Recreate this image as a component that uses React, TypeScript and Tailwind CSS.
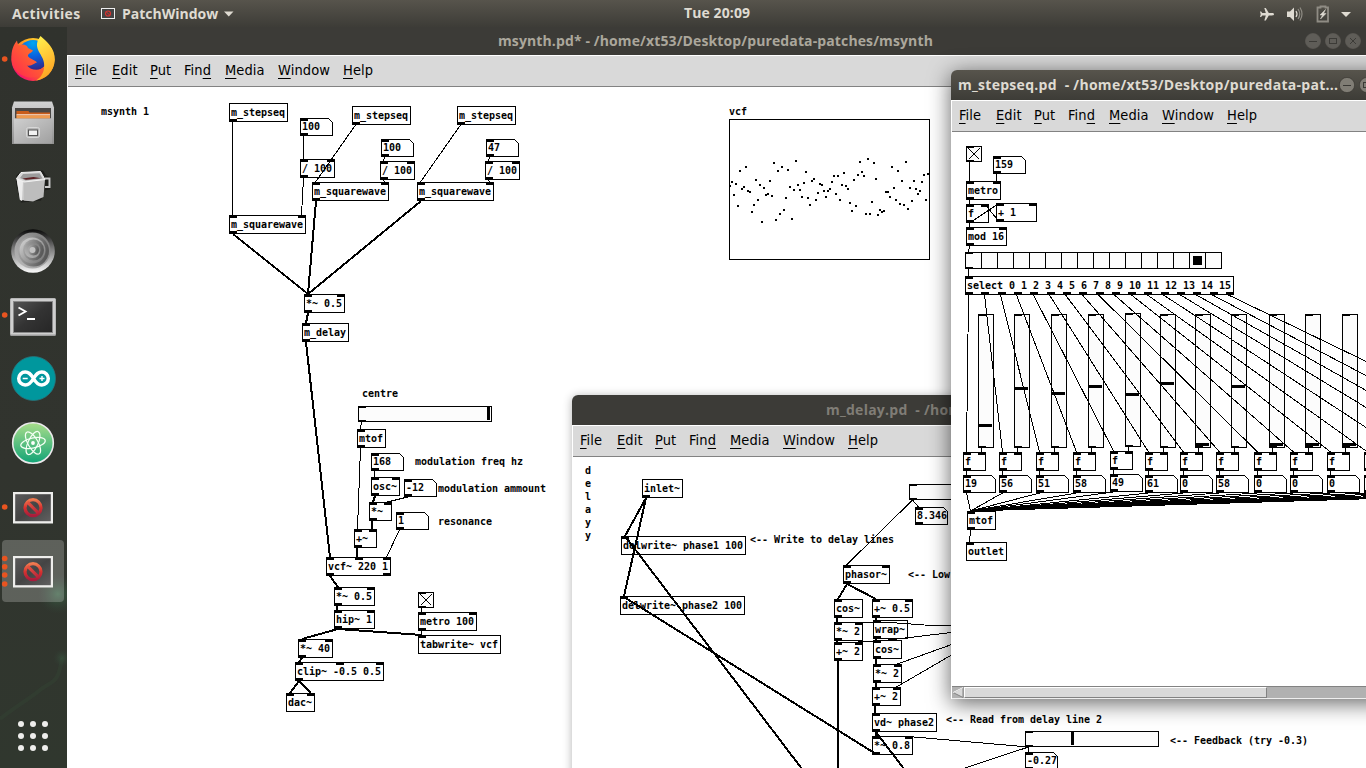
import React from 'react';

type Kind = 'obj' | 'num';
interface Item {
  k: Kind;
  x: number;
  y: number;
  t: string;
  ins?: number;
  outs?: number;
  chars?: number;
}

const o = (x: number, y: number, t: string, ins = 1, outs = 1, chars?: number): Item => ({ k: 'obj', x, y, t, ins, outs, chars });
const n = (x: number, y: number, t: string): Item => ({ k: 'num', x, y, t });

const MONO = 'font-["DejaVu_Sans_Mono",monospace] font-bold text-[10px] tracking-[-0.02px] whitespace-pre text-black';

function Ports({ count, edge }: { count: number; edge: 'top' | 'bottom' }) {
  return (
    <div className="flex h-[3px] justify-between">
      {Array.from({ length: count }, (_, i) => (
        <span key={i} className={edge === 'top' ? 'h-[3px] w-2 shrink-0 bg-black' : 'h-[3px] w-2 shrink-0 bg-black'} />
      ))}
    </div>
  );
}

function Box({ it }: { it: Item }) {
  if (it.k === 'num') {
    return (
      <div className="absolute flex h-[18px] w-[33px] flex-col justify-between" style={{ left: it.x, top: it.y }}>
        <svg className="absolute inset-0" width="33" height="18" shapeRendering="crispEdges">
          <path d="M.5.5H28.5L32.5 4.5V17.5H.5Z" fill="none" stroke="#000" />
        </svg>
        <Ports count={1} edge="top" />
        <span className={`-my-[3px] pl-[2px] leading-[18px] ${MONO}`}>{it.t}</span>
        <Ports count={1} edge="bottom" />
      </div>
    );
  }
  const width = (it.chars ?? Math.max(3, it.t.length)) * 6 + 5;
  return (
    <div
      className="absolute flex h-[19px] flex-col justify-between outline-1 -outline-offset-1 outline-black"
      style={{ left: it.x, top: it.y, width }}
    >
      <Ports count={it.ins ?? 0} edge="top" />
      <span className={`-my-[3px] pl-[2px] leading-[19px] ${MONO}`}>{it.t}</span>
      <Ports count={it.outs ?? 0} edge="bottom" />
    </div>
  );
}

function Note({ x, y, t }: { x: number; y: number; t: string }) {
  return (
    <span className={`absolute leading-[13px] ${MONO}`} style={{ left: x, top: y - 6 }}>
      {t}
    </span>
  );
}

function HSlider({ x, y, knob }: { x: number; y: number; knob?: number }) {
  return (
    <svg className="absolute" style={{ left: x, top: y }} width="134" height="16" shapeRendering="crispEdges">
      <rect x=".5" y=".5" width="133" height="15" fill="#fcfcfc" stroke="#000" />
      <path d="M0 0h8v2H0zM0 14h8v2H0z" />
      {knob !== undefined && <rect x={knob + 1} y="1" width="3" height="13" />}
    </svg>
  );
}

function VSlider({ x, y, knob }: { x: number; y: number; knob: number }) {
  return (
    <svg className="absolute" style={{ left: x, top: y }} width="16" height="134" shapeRendering="crispEdges">
      <rect x=".5" y=".5" width="15" height="133" fill="#fcfcfc" stroke="#000" />
      <path d="M0 0h8v2H0zM0 132h8v2H0z" />
      <rect x="1" y={knob - y} width="13" height="3" />
    </svg>
  );
}

function Toggle({ x, y }: { x: number; y: number }) {
  return (
    <svg className="absolute" style={{ left: x, top: y }} width="16" height="16" shapeRendering="crispEdges">
      <rect x=".5" y=".5" width="15" height="15" fill="#fcfcfc" stroke="#000" />
      <path d="M0 0h8v2H0zM0 14h8v2H0z" />
      <path d="M2.500 2.500L13.500 13.500M2.500 13.500L13.500 2.500" stroke="#000" />
    </svg>
  );
}

type Wire = [number, number, number, number, number?];

function Wires({ list }: { list: Wire[] }) {
  return (
    <svg className="absolute inset-0" width="1366" height="768" shapeRendering="crispEdges">
      {list.map(([x1, y1, x2, y2, w], i) => (
        <line key={i} x1={x1} y1={y1} x2={x2} y2={y2} stroke="#000" strokeWidth={w ?? 1} />
      ))}
    </svg>
  );
}

const MENU: [string, string, string, string][] = [
  ['', 'F', 'ile', 'w-[24px]'],
  ['', 'E', 'dit', 'w-[25px]'],
  ['', 'P', 'ut', 'w-[21px]'],
  ['Fin', 'd', '', 'w-[28px]'],
  ['', 'M', 'edia', 'w-[40px]'],
  ['', 'W', 'indow', 'w-[52px]'],
  ['', 'H', 'elp', 'w-[30px]'],
];

function MenuBar() {
  return (
    <div className="flex h-8 shrink-0 items-center gap-[13px] border-b border-t border-b-[#828282] border-t-white bg-[#d9d9d9] pb-[2px] pl-[7px] font-['DejaVu_Sans_Condensed','DejaVu_Sans',sans-serif] text-[14.500px] leading-none tracking-[0.1px] text-black [font-stretch:condensed]">
      {MENU.map(([a, u, b, w]) => (
        <span key={u} className={`${w} whitespace-nowrap`}>
          {a}
          <span className="underline decoration-1 underline-offset-[3px]">{u}</span>
          {b}
        </span>
      ))}
    </div>
  );
}

const UI = 'font-["Open_Sans","Noto_Sans",sans-serif] font-bold whitespace-pre';

function WinButton({ kind, active }: { kind: 'min' | 'max' | 'close'; active?: boolean }) {
  const s = active ? '#3a3935' : '#3c3b37';
  return (
    <svg width="16" height="16" viewBox="0 0 16 16" className="shrink-0">
      <circle cx="8" cy="8" r="7.600" fill={active ? '#807d75' : '#5f5d58'} stroke={active ? '#35342f' : '#5f5d58'} strokeWidth=".6" />
      {kind === 'min' && <path d="M4 8.500h8" stroke={s} />}
      {kind === 'max' && <rect x="4.500" y="5.500" width="7" height="5" fill="none" stroke={s} />}
      {kind === 'close' && <path d="M5 5l6 6M11 5l-6 6" stroke={s} />}
    </svg>
  );
}

/* ---------- msynth.pd ---------- */

const mainItems: Item[] = [
  o(229, 103, 'm_stepseq', 0, 1),
  n(300, 118, '100'),
  o(300, 159, '/ 100', 2, 1),
  o(352, 106, 'm_stepseq', 0, 1),
  o(457, 106, 'm_stepseq', 0, 1),
  n(381, 139, '100'),
  o(380, 161, '/ 100', 2, 1),
  n(486, 139, '47'),
  o(485, 161, '/ 100', 2, 1),
  o(312, 182, 'm_squarewave', 2, 1),
  o(417, 182, 'm_squarewave', 2, 1),
  o(229, 215, 'm_squarewave', 2, 1),
  o(304, 294, '*~ 0.5', 2, 1),
  o(302, 323, 'm_delay'),
  o(357, 429, 'mtof'),
  n(371, 453, '168'),
  o(371, 477, 'osc~', 2, 1),
  n(404, 479, '-12'),
  o(369, 502, '*~', 2, 1),
  n(396, 512, '1'),
  o(354, 529, '+~', 2, 1),
  o(326, 557, 'vcf~ 220 1', 3, 2),
  o(334, 587, '*~ 0.5', 2, 1),
  o(334, 610, 'hip~ 1', 2, 1),
  o(298, 639, '*~ 40', 2, 1),
  o(295, 662, 'clip~ -0.5 0.5', 3, 1),
  o(286, 693, 'dac~', 2, 0),
  o(418, 612, 'metro 100', 2, 1),
  o(418, 635, 'tabwrite~ vcf', 1, 0),
];

const mainWires: Wire[] = [
  [232.5, 122, 232.5, 215],
  [303.5, 136, 303.5, 159],
  [303.5, 178, 301.5, 215],
  [355.5, 125, 315.5, 182],
  [460.5, 125, 420.5, 182],
  [384.5, 157, 383.5, 161],
  [383.5, 180, 384.5, 182],
  [489.5, 157, 488.5, 161],
  [488.5, 180, 489.5, 182],
  [233, 234, 308, 294, 2],
  [316, 201, 308, 294, 2],
  [421, 201, 308, 294, 2],
  [308, 313, 306, 323, 2],
  [306, 342, 330, 557, 2],
  [361.5, 422, 360.5, 429],
  [360.5, 448, 357.5, 529],
  [374.5, 471, 374.5, 477],
  [375, 496, 373, 502, 2],
  [407.5, 497, 387.5, 502],
  [372, 521, 372, 529, 2],
  [357, 548, 357, 557, 2],
  [399.5, 530, 386.5, 557],
  [330, 576, 338, 587, 2],
  [337, 606, 337, 610, 2],
  [338, 629, 302, 639, 2],
  [338, 629, 422, 635, 2],
  [302, 658, 299, 662, 2],
  [299, 681, 290, 693, 2],
  [299, 681, 311, 693, 2],
  [421.5, 608, 421.5, 612],
  [421.5, 631, 421.5, 635],
];

const vcfSamples = [
  258, 246, 285, 252, 318, 213, 267, 261, 201, 273, 276, 336, 315, 240, 300, 255, 366, 264, 285, 282, 243, 288, 189, 360, 213,
  342, 201, 330, 294, 210, 261, 357, 270, 183, 255, 270, 291, 249, 216, 294, 315, 243, 237, 300, 279, 252, 255, 273, 291, 273,
  267, 246, 228, 282, 228, 300, 255, 219, 258, 267, 309, 333, 240, 318, 225, 186, 216, 228, 342, 177, 342, 306, 189, 237, 345,
  330, 336, 333, 276, 276, 291, 201, 264, 300, 213, 312, 243, 315, 186, 327, 264, 303, 243, 267, 282, 273, 246, 225, 300, 222,
];

function MainPatch() {
  return (
    <div className="absolute -left-[68px] -top-[87px] h-[768px] w-[1366px]">
      <Note x={101} y={111} t="msynth 1" />
      <Note x={362} y={393} t="centre" />
      <Note x={415} y={461} t="modulation freq hz" />
      <Note x={438} y={488} t="modulation ammount" />
      <Note x={438} y={521} t="resonance" />
      <Note x={729} y={111} t="vcf" />
      <HSlider x={358} y={406} knob={128} />
      <Toggle x={418} y={592} />
      {mainItems.map((it, i) => (
        <Box key={i} it={it} />
      ))}
      <Wires list={mainWires} />
      <svg className="absolute left-[729px] top-[119px]" width="202" height="141" shapeRendering="crispEdges">
        <rect x=".5" y=".5" width="200" height="140" fill="none" stroke="#000" />
        {vcfSamples.map((v, i) => (
          <rect key={i} x={i * 2} y={Math.round(v / 3) - 20} width="2" height="2" />
        ))}
      </svg>
    </div>
  );
}

/* ---------- m_delay.pd ---------- */

const delayItems: Item[] = [
  o(642, 479, 'inlet~', 0, 1),
  o(621, 536, 'delwrite~ phase1 100', 1, 0),
  o(620, 596, 'delwrite~ phase2 100', 1, 0),
  n(915, 507, '8.346'),
  o(843, 565, 'phasor~', 2, 1),
  o(834, 599, 'cos~'),
  o(872, 599, '+~ 0.5', 2, 1),
  o(834, 622, '*~ 2', 2, 1),
  o(834, 642, '+~ 2', 2, 1),
  o(873, 620, 'wrap~'),
  o(873, 640, 'cos~'),
  o(873, 664, '*~ 2', 2, 1),
  o(872, 687, '+~ 2', 2, 1),
  o(872, 713, 'vd~ phase2'),
  o(872, 736, '*~ 0.8', 2, 1),
  n(1025, 752, '-0.27'),
];

const delayWires: Wire[] = [
  [646, 498, 625, 536, 2],
  [646, 498, 624, 596, 2],
  [625, 536, 802, 769, 2],
  [624, 597, 876, 754, 2],
  [912.5, 500, 918.5, 507],
  [912.5, 500, 846.5, 565],
  [847, 584, 838, 599, 2],
  [847, 584, 876, 599, 2],
  [837, 618, 837, 622, 2],
  [837, 641, 837, 642, 2],
  [838, 661, 838, 768, 2],
  [876, 618, 876, 620, 2],
  [876, 639, 876, 640, 2],
  [876, 659, 876, 664, 2],
  [876, 683, 876, 687, 2],
  [875, 706, 875, 713, 2],
  [876, 732, 876, 736, 2],
  [876, 732, 904, 769, 2],
  [858.5, 622.5, 897, 622.5],
  [897, 623.5, 924, 624.5],
  [924, 625, 960, 625.5],
  [858.5, 642, 880, 641],
  [880, 641, 960, 631.5],
  [897.5, 664, 960, 641.5],
  [896.5, 687, 960, 650],
  [908.5, 736.5, 1028.5, 747],
  [1028.5, 747, 962, 769],
  [1028.5, 747, 1028.5, 752],
];

function DelayPatch() {
  return (
    <div className="absolute -left-[573px] -top-[457px] h-[768px] w-[1366px]">
      <div className={`absolute left-[585px] top-[464px] flex flex-col leading-[13px] ${MONO}`}>
        {['d', 'e', 'l', 'a', 'y', 'y'].map((c, i) => (
          <span key={i}>{c}</span>
        ))}
      </div>
      <Note x={750} y={539} t="<-- Write to delay lines" />
      <Note x={908} y={574} t="<-- Low" />
      <Note x={946} y={719} t="<-- Read from delay line 2" />
      <Note x={1170} y={740} t="<-- Feedback (try -0.3)" />
      <HSlider x={909} y={484} />
      <HSlider x={1025} y={731} knob={45} />
      {delayItems.map((it, i) => (
        <Box key={i} it={it} />
      ))}
      <Wires list={delayWires} />
    </div>
  );
}

/* ---------- m_stepseq.pd ---------- */

const stepX = [963, 999, 1036, 1073, 1110, 1145, 1180, 1216, 1254, 1290, 1327, 1364, 1400, 1436, 1472, 1508, 1550];
const stepValues = ['19', '56', '51', '58', '49', '61', '0', '58', '0', '0', '0'];
const knobs = [424, 387, 392, 385, 393, 382, 443, 385, 443, 443, 443];
const sliderX = [978, 1014, 1051, 1088, 1125, 1160, 1195, 1231, 1269, 1305, 1342];
const lift = (i: number) => (i === 4 ? 1 : 0);

const seqItems: Item[] = [
  n(993, 156, '159'),
  o(966, 181, 'metro', 2, 1),
  o(966, 204, 'f', 2, 1),
  o(996, 203, '+ 1', 2, 1, 6),
  o(966, 227, 'mod 16', 2, 1),
  o(965, 276, 'select 0 1 2 3 4 5 6 7 8 9 10 11 12 13 14 15', 1, 17),
  ...stepValues.flatMap((v, i) => [o(stepX[i], 452 - lift(i), 'f', 2, 1), n(stepX[i], 475 - lift(i), v)]),
  o(1364, 452, '', 2, 1),
  n(1364, 475, ''),
  o(967, 511, 'mtof'),
  o(966, 542, 'outlet', 1, 0),
];

const seqWires: Wire[] = [
  [969.5, 162, 969.5, 181],
  [996.5, 174, 996.5, 181],
  [969.5, 200, 969.5, 204],
  [969.5, 223, 999.5, 203],
  [999.5, 222, 984.5, 204],
  [969.5, 223, 969.5, 227],
  [969.5, 246, 968.5, 252],
  [968.5, 269, 968.5, 276],
  ...stepX.map((x, i): Wire => [968.5 + Math.floor(i * 16.31), 295, x + 3.5, 452 - lift(i)]),
  ...sliderX.map((x, i): Wire => [x + 3.5, 448 - lift(i), x + 3.5, 452 - lift(i)]),
  ...stepX.slice(0, 11).map((x, i): Wire => [x + 3.5, 471 - lift(i), x + 3.5, 475 - lift(i)]),
  ...stepX.map((x, i): Wire => [x + 3.5, 493 - lift(i), 970.5, 511]),
  [970.5, 530, 969.5, 542],
];

function StepPatch() {
  return (
    <div className="absolute -left-[952px] -top-[132px] h-[768px] w-[1366px]">
      <Toggle x={966} y={146} />
      <svg className="absolute left-[965px] top-[252px]" width="257" height="17" shapeRendering="crispEdges">
        {Array.from({ length: 16 }, (_, i) => (
          <rect key={i} x={i * 16 + 0.5} y=".5" width="16" height="16" fill="#fcfcfc" stroke="#000" />
        ))}
        <path d="M0 0h8v2H0zM0 15h8v2H0zM228 4h9v9h-9z" />
      </svg>
      {sliderX.map((x, i) => (
        <VSlider key={x} x={x} y={314 - lift(i)} knob={knobs[i]} />
      ))}
      {seqItems.map((it, i) => (
        <Box key={i} it={it} />
      ))}
      <Wires list={seqWires} />
    </div>
  );
}

/* ---------- dock ---------- */

function PdIcon({ y }: { y: number }) {
  return (
    <g transform={`translate(13 ${y})`}>
      <rect width="40" height="31.500" fill="#eeeeec" />
      <rect x="2.200" y="2.200" width="35.600" height="27" fill="url(#pdbg)" />
      <circle cx="20" cy="15.700" r="8" fill="none" stroke="url(#pdred)" strokeWidth="3.200" />
      <path d="M14.500 10.200l11 11" stroke="url(#pdred2)" strokeWidth="3.200" />
    </g>
  );
}

function Dock() {
  return (
    <svg width="67" height="741" viewBox="0 27 67 741" className="block shrink-0">
      <defs>
        <linearGradient id="pdbg" x1="0" y1="0" x2="1" y2="1"><stop offset="0" stopColor="#5a5a5a" /><stop offset=".5" stopColor="#444" /><stop offset="1" stopColor="#606060" /></linearGradient>
        <linearGradient id="pdred" x1="0" y1="0" x2="0" y2="1"><stop offset="0" stopColor="#ef7a50" /><stop offset=".5" stopColor="#d8322f" /><stop offset="1" stopColor="#a81c3c" /></linearGradient>
        <linearGradient id="pdred2" x1="0" y1="0" x2="1" y2="1"><stop offset="0" stopColor="#e65540" /><stop offset="1" stopColor="#b8233a" /></linearGradient>
        <linearGradient id="ff" x1="1" y1="0" x2="0" y2="1"><stop offset="0" stopColor="#fff44f" /><stop offset=".35" stopColor="#ffb01f" /><stop offset=".6" stopColor="#ff5a2a" /><stop offset=".85" stopColor="#f5156c" /></linearGradient>
        <linearGradient id="ffy" x1="0" y1="0" x2=".3" y2="1"><stop offset="0" stopColor="#fff44f" /><stop offset="1" stopColor="#ffa524" /></linearGradient>
        <linearGradient id="ffo" x1="1" y1="0" x2="0" y2="1"><stop offset="0" stopColor="#ff8a1c" /><stop offset="1" stopColor="#ff2450" /></linearGradient>
        <radialGradient id="ffb" cx=".5" cy=".1" r=".85"><stop offset="0" stopColor="#00a7f0" /><stop offset=".5" stopColor="#0a63e0" /><stop offset="1" stopColor="#302a8c" /></radialGradient>
        <linearGradient id="cab" x1="0" y1="0" x2="0" y2="1"><stop offset="0" stopColor="#d2d2d2" /><stop offset="1" stopColor="#8f8f8f" /></linearGradient>
        <linearGradient id="cab2" x1="0" y1="0" x2="1" y2="1"><stop offset="0" stopColor="#cfcfcf" /><stop offset="1" stopColor="#a0a0a0" /></linearGradient>
        <linearGradient id="spA" x1="0" y1="0" x2="0" y2="1"><stop offset="0" stopColor="#080808" /><stop offset=".45" stopColor="#7c7c7c" /><stop offset="1" stopColor="#fafafa" /></linearGradient>
        <linearGradient id="spB" x1="0" y1="0" x2="1" y2=".3"><stop offset="0" stopColor="#b4b4b4" /><stop offset="1" stopColor="#5a5a5a" /></linearGradient>
        <linearGradient id="spC" x1="0" y1="0" x2="1" y2="1"><stop offset="0" stopColor="#d8d8d8" /><stop offset="1" stopColor="#6e6e6e" /></linearGradient>
        <linearGradient id="spD" x1="1" y1="0" x2="0" y2="1"><stop offset="0" stopColor="#777" /><stop offset="1" stopColor="#bdbdbd" /></linearGradient>
        <linearGradient id="term" x1="0" y1="0" x2="1" y2="1"><stop offset="0" stopColor="#555" /><stop offset=".5" stopColor="#333" /><stop offset="1" stopColor="#262626" /></linearGradient>
        <linearGradient id="atom" x1="0" y1="0" x2="0" y2="1"><stop offset="0" stopColor="#a9dd8a" /><stop offset="1" stopColor="#11a476" /></linearGradient>
        <radialGradient id="glow"><stop offset="0" stopColor="#3d6a4a" stopOpacity=".8" /><stop offset="1" stopColor="#33483a" stopOpacity="0" /></radialGradient>
        <linearGradient id="dockbg" x1="0" y1="0" x2="0" y2="1"><stop offset="0" stopColor="#30322d" /><stop offset=".6" stopColor="#31342e" /><stop offset="1" stopColor="#30372e" /></linearGradient>
      </defs>
      <rect y="27" width="67" height="741" fill="url(#dockbg)" />
      <circle cx="58" cy="594" r="20" fill="url(#glow)" />
      <circle cx="62" cy="658" r="9" fill="url(#glow)" opacity=".5" />
      <path d="M0 719C16 706 28 700 40 690S58 686 62 658" fill="none" stroke="#35503c" strokeWidth="4" opacity=".22" />
      <rect x="2" y="540" width="62" height="62" rx="4" fill="#fff" opacity=".22" />

      <circle cx="33" cy="59.500" r="21.500" fill="url(#ff)" />
      <circle cx="33" cy="55.500" r="15.500" fill="url(#ffb)" />
      <path d="M11.500 60C11 50 13.500 45 17 40.500C17.300 43 18 44 19 45.500C23 43.500 27 44.500 28 48L33 50.500C32 53 27.500 53.500 28 56C29 59 35 59.500 37 62.500C34 63 32 66.500 27 65.500C31 71 41 71 45.500 66C44 76 34 80 24 76C16 73 12 67 11.500 60Z" fill="url(#ffo)" />
      <path d="M40.500 36C47 42 55 48 54.800 60C54 72 46 79 36 80.500C42 77 45 71 44 63C43.500 55 34 50 38 40Z" fill="url(#ffy)" />

      <path d="M14 101.500h38l2 6v36.500H12v-36.500z" fill="url(#cab)" />
      <path d="M15 108h36v10.500h-36z" fill="#4a4744" />
      <path d="M16.500 111h12l1 1.500h20.500v6h-33.500z" fill="#c95c1a" />
      <path d="M16.500 114.200h33.500v1.300h-33.500z" fill="#f7e6d8" />
      <path d="M16.500 115.500h33.500v3h-33.500z" fill="#ee9a4e" />
      <path d="M14 118.500h38v25H14z" fill="url(#cab2)" />
      <rect x="26.500" y="127.500" width="13" height="10" rx="2" fill="#b5b5b5" stroke="#d8d8d8" />
      <rect x="28.500" y="130" width="9" height="5.500" fill="#f2f2f2" stroke="#555" strokeWidth="1" />

      <path d="M16 176l4-4 23-1.500 3 5 5 2-1 12-6 1-3 10-20 2-5-18z" fill="#171815" opacity=".75" />
      <path d="M45 178.500h4.500v8.500h-4.500" fill="none" stroke="#c8c8c8" strokeWidth="2" />
      <path d="M16.500 178.500L33 182v19L20 200z" fill="#c9c9c9" />
      <path d="M24 180.500L45 179.500 43.500 197 33 201.500 24 200.500z" fill="#bdbdbd" />
      <path d="M16.500 178.500L20 200l2 1 1-20z" fill="#ececec" />
      <path d="M16.500 178.500L21 172.500l19.500-1L45 179.500 24 182z" fill="#d8d8d8" stroke="#f3f3f3" />
      <path d="M20 178l3-4 16.500-.8 3 5.300-17 2z" fill="#9c9c9c" />
      <path d="M22.500 178.500l11-1.500 7.500 1.300-15 1.500z" fill="#5c2023" />

      <circle cx="33" cy="251" r="21.800" fill="url(#spA)" />
      <circle cx="32.500" cy="250.500" r="18" fill="url(#spD)" />
      <circle cx="33.500" cy="251" r="15.500" fill="url(#spB)" />
      <circle cx="32.500" cy="250.500" r="13" fill="url(#spC)" />
      <circle cx="33.500" cy="250" r="10.500" fill="url(#spB)" />
      <circle cx="32.500" cy="250" r="8" fill="url(#spD)" />
      <circle cx="33.500" cy="250" r="5.500" fill="url(#spB)" />
      <circle cx="32.500" cy="250" r="3" fill="#c2c2c2" />

      <rect x="10" y="298" width="46" height="38" rx="1.500" fill="#9c9c9c" />
      <rect x="10.500" y="298.500" width="45" height="36" rx="1" fill="#cfcfcf" />
      <rect x="13.500" y="301.500" width="39" height="31" fill="url(#term)" stroke="#888" />
      <path d="M18.500 307.500l7 4-7 4M27 319h8" fill="none" stroke="#fff" strokeWidth="1.900" />

      <circle cx="33.500" cy="378.500" r="22" fill="#00979d" stroke="#28747a" strokeWidth=".8" />
      <path d="M33.500 378.500C31 374 28.500 372 25.200 372a6.500 6.500 0 1 0 0 13C28.500 385 31 383 33.500 378.500C36 374 38.500 372 41.800 372a6.500 6.500 0 1 1 0 13C38.500 385 36 383 33.500 378.500Z" fill="none" stroke="#fff" strokeWidth="3.500" />
      <path d="M22.700 378.500h5M39.500 378.500h5M42 376v5" stroke="#fff" strokeWidth="1.400" />

      <circle cx="33" cy="443" r="20.300" fill="url(#atom)" stroke="#ece9ec" strokeWidth="1.600" />
      <g fill="none" stroke="#f4fff4" strokeWidth="1.200">
        <ellipse cx="33" cy="443" rx="12.500" ry="5" transform="rotate(-12 33 443)" />
        <ellipse cx="33" cy="443" rx="12.500" ry="5" transform="rotate(60 33 443)" />
        <ellipse cx="33" cy="443" rx="12.500" ry="5" transform="rotate(115 33 443)" />
      </g>
      <circle cx="33" cy="443" r="1.900" fill="#fff" />

      <PdIcon y={492} />
      <PdIcon y={556} />
      {[59, 315, 507, 558.5, 566.7, 575, 584].map((y) => (
        <circle key={y} cx="4.700" cy={y} r="2.800" fill="#e95420" />
      ))}
      {[724, 736, 748].map((y) => [21, 33, 45].map((x) => <circle key={`${x}-${y}`} cx={x} cy={y} r="3" fill="#eeeeec" />))}
    </svg>
  );
}

function TopBar() {
  return (
    <div className={`grid h-[27px] shrink-0 grid-cols-[684px_1fr_110px] items-center bg-linear-to-b from-[#57544c] to-[#3d3c37] text-[14px] leading-none text-[#dfdbd2] ${UI}`}>
      <div className="flex items-center pl-3">
        <span className="w-[89px] tracking-[0.350px]">Activities</span>
        <svg width="14" height="11" className="shrink-0">
          <rect x=".5" y=".5" width="13" height="10" fill="#444" stroke="#eee" />
          <circle cx="7" cy="5.500" r="2.500" fill="none" stroke="#d8322f" strokeWidth="1.200" />
          <path d="M5.200 3.700l3.600 3.600" stroke="#d8322f" />
        </svg>
        <span className="ml-[7px] w-[97px]">PatchWindow</span>
        <svg width="10" height="6" className="ml-[5px]"><path d="M0 .5h9.500L4.750 5.500z" fill="#dfdbd2" /></svg>
      </div>
      <span className="pb-px tracking-[0.100px]">Tue 20:09</span>
      <svg width="96" height="20" viewBox="1256 3 96 20">
        <path d="M1274 13.200c0-.8-.8-1.200-2-1.200h-3.200l-3-5h-1.500l1.500 5h-3.500l-1.200-1.500h-1.100l.7 2.700-.7 2.700h1.100l1.200-1.500h3.500l-1.500 5h1.500l3-5h3.200c1.200 0 2-.400 2-1.200z" fill="#dfdbd2" />
        <path d="M1287 10.500h3l4-4v13.500l-4-4h-3z" fill="#dfdbd2" />
        <path d="M1296 10q2 3 0 6" fill="none" stroke="#dfdbd2" strokeWidth="1.200" />
        <path d="M1298 8q3.500 5 0 10M1300 6.500q4 6.500 0 13" fill="none" stroke="#8f8c84" strokeWidth="1.200" />
        <path d="M1320.500 6.500v-1h5v1h2.500v14h-10.500v-14z" fill="none" stroke="#8f8c84" strokeWidth="1.800" />
        <path d="M1325.500 8.500l-5.500 5.500h2.500l-2 4 5.500-5.500h-2.500z" fill="#dfdbd2" stroke="#dfdbd2" strokeWidth=".5" />
        <path d="M1341 11h10l-5 5z" fill="#dfdbd2" />
      </svg>
    </div>
  );
}

export default function App() {
  return (
    <div className="relative flex h-[768px] w-[1366px] flex-col overflow-hidden bg-[#31342e]">
      <TopBar />
      <div className="flex min-h-0 flex-1">
        <Dock />
        <section className="flex min-w-0 flex-1 flex-col bg-[#3c3b37]">
          <div className="flex h-7 shrink-0 items-center pl-[431px] pr-[5px]">
            <span className={`text-[14px] leading-none tracking-[0.120px] text-[#aba79c] ${UI}`}>msynth.pd* - /home/xt53/Desktop/puredata-patches/msynth</span>
            <div className="ml-auto flex gap-1">
              <WinButton kind="min" />
              <WinButton kind="max" />
              <WinButton kind="close" />
            </div>
          </div>
          <div className="flex min-h-0 flex-1 flex-col border-l border-white">
            <MenuBar />
            <div className="relative flex-1 overflow-hidden bg-white">
              <MainPatch />
            </div>
          </div>
        </section>
      </div>

      <section className="absolute left-[572px] top-[395px] flex h-[420px] w-[850px] flex-col rounded-t-md shadow-[0_1px_10px_rgba(0,0,0,0.3)]">
        <div className="flex h-[30px] shrink-0 items-center rounded-t-md bg-[#3c3b37] pl-[254px]">
          <span className={`text-[14px] leading-none tracking-[0.250px] text-[#807d76] ${UI}`}>{'m_delay.pd  - /home/xt53/Desktop'}</span>
        </div>
        <div className="flex min-h-0 flex-1 flex-col border-l border-white">
          <MenuBar />
          <div className="relative flex-1 overflow-hidden bg-white">
            <DelayPatch />
          </div>
        </div>
      </section>

      <section className="absolute left-[951px] top-[70px] flex h-[629px] w-[500px] flex-col rounded-t-md shadow-[0_4px_22px_rgba(0,0,0,0.62)]">
        <div className="flex h-[30px] shrink-0 items-center rounded-t-md bg-linear-to-b from-[#57544c] to-[#3d3c37] pl-[7px]">
          <span className={`w-[381px] text-[14px] leading-none tracking-[0.280px] text-[#dfdbd2] ${UI}`}>{'m_stepseq.pd  - /home/xt53/Desktop/puredata-pat...'}</span>
          <div className="flex gap-1">
            <WinButton kind="min" active />
            <WinButton kind="max" active />
          </div>
        </div>
        <div className="flex min-h-0 flex-1 flex-col border-l border-white">
          <MenuBar />
          <div className="relative flex-1 overflow-hidden bg-white">
            <StepPatch />
          </div>
          <div className="flex h-[13px] shrink-0 border-b border-t border-b-[#eee] border-t-[#828282] bg-[#b1b1b1]">
            <svg width="12" height="11" className="shrink-0">
              <path d="M11 .5L1 5.500L11 10.500Z" fill="#d9d9d9" stroke="#828282" />
              <path d="M11 .5L1 5.500" stroke="#fff" />
            </svg>
            <div className="h-[11px] w-[303px] border border-b-[#828282] border-l-white border-r-[#828282] border-t-white bg-[#d9d9d9]" />
          </div>
        </div>
      </section>
    </div>
  );
}
